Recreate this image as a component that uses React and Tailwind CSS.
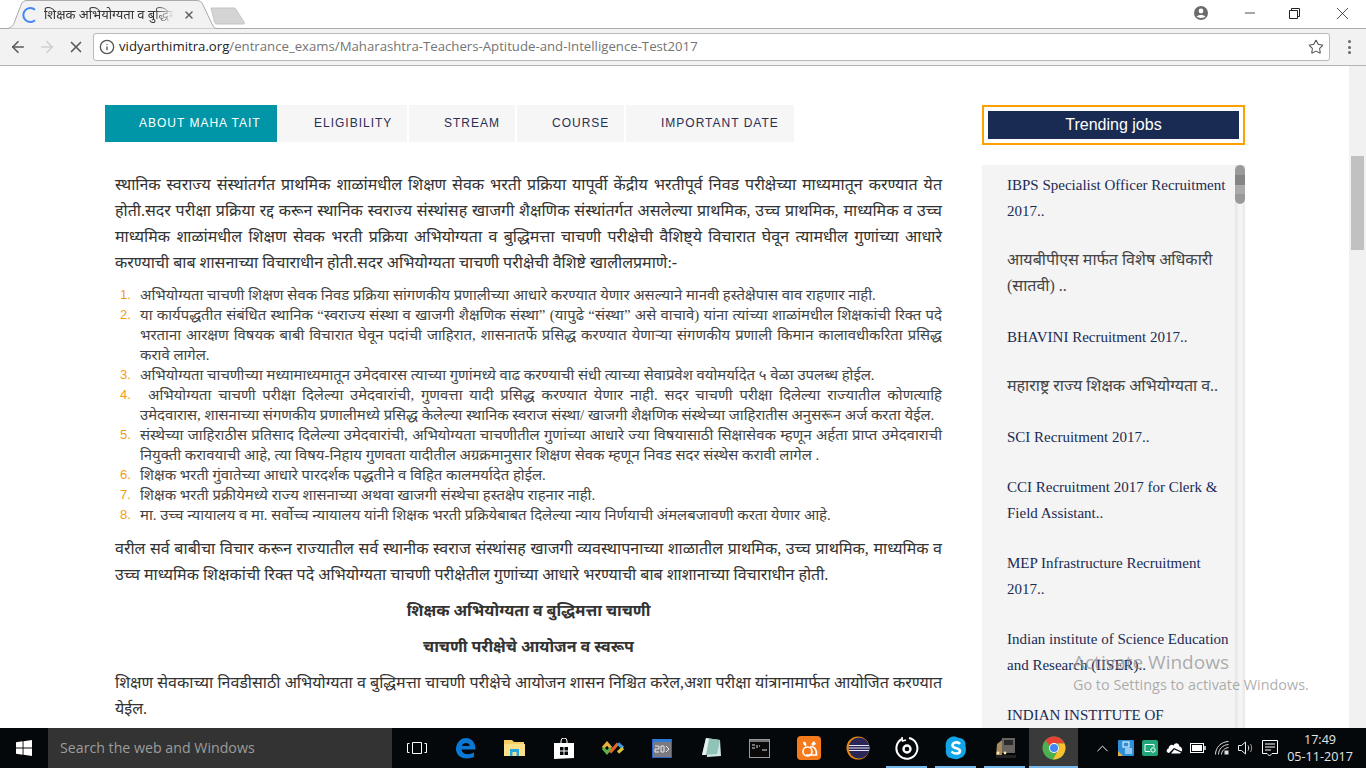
import React from 'react';
import { ArrowLeft, ArrowRight, X, Info, Star, Minus, ChevronUp } from 'lucide-react';

const DEVA = "font-['Liberation_Serif','Noto_Sans_Devanagari','Lohit_Devanagari','Noto_Serif_Devanagari','Noto_Sans',serif]";

const tabs = [
  { label: 'ABOUT MAHA TAIT', w: 'w-[172px]', pl: 'pl-[34px]', active: true },
  { label: 'ELIGIBILITY', w: 'w-[128px]', pl: 'pl-[35px]' },
  { label: 'STREAM', w: 'w-[106px]', pl: 'pl-[35px]' },
  { label: 'COURSE', w: 'w-[107px]', pl: 'pl-[35px]' },
  { label: 'IMPORTANT DATE', w: 'w-[168px]', pl: 'pl-[35px]' },
];

const para1 = [
  'स्थानिक स्वराज्य संस्थांतर्गत प्राथमिक शाळांमधील शिक्षण सेवक भरती प्रक्रिया यापूर्वी केंद्रीय भरतीपूर्व निवड परीक्षेच्या माध्यमातून करण्यात येत',
  'होती.सदर परीक्षा प्रक्रिया रद्द करून स्थानिक स्वराज्य संस्थांसह खाजगी शैक्षणिक संस्थांतर्गत असलेल्या प्राथमिक, उच्च प्राथमिक, माध्यमिक व उच्च',
  'माध्यमिक शाळांमधील शिक्षण सेवक भरती प्रक्रिया अभियोग्यता व बुद्धिमत्ता चाचणी परीक्षेची वैशिष्ट्ये विचारात घेवून त्यामधील गुणांच्या आधारे',
];

const points = [
  { lines: ['अभियोग्यता चाचणी शिक्षण सेवक निवड प्रक्रिया सांगणकीय प्रणालीच्या आधारे करण्यात येणार असल्याने मानवी हस्तेक्षेपास वाव राहणार नाही.'] },
  { lines: ['या कार्यपद्धतीत संबंधित स्थानिक “स्वराज्य संस्था व खाजगी शैक्षणिक संस्था” (यापुढे “संस्था” असे वाचावे) यांना त्यांच्या शाळांमधील शिक्षकांची रिक्त पदे', 'भरताना आरक्षण विषयक बाबी विचारात घेवून पदांची जाहिरात, शासनातर्फे प्रसिद्ध करण्यात येणाऱ्या संगणकीय प्रणाली किमान कालावधीकरिता प्रसिद्ध', 'करावे लागेल.'] },
  { lines: ['अभियोग्यता चाचणीच्या मध्यामाध्यमातून उमेदवारस त्याच्या गुणांमध्ये वाढ करण्याची संधी त्याच्या सेवाप्रवेश वयोमर्यादेत ५ वेळा उपलब्ध होईल.'] },
  { lines: ['अभियोग्यता चाचणी परीक्षा दिलेल्या उमेदवारांची, गुणवत्ता यादी प्रसिद्ध करण्यात येणार नाही. सदर चाचणी परीक्षा दिलेल्या राज्यातील कोणत्याहि', 'उमेदवारास, शासनाच्या संगणकीय प्रणालीमध्ये प्रसिद्ध केलेल्या स्थानिक स्वराज संस्था/ खाजगी शैक्षणिक संस्थेच्या जाहिरातीस अनुसरून अर्ज करता येईल.'], indent: true },
  { lines: ['संस्थेच्या जाहिराठीस प्रतिसाद दिलेल्या उमेदवारांची, अभियोग्यता चाचणीतील गुणांच्या आधारे ज्या विषयासाठी सिक्षासेवक म्हणून अर्हता प्राप्त उमेदवाराची', 'नियुक्ती करावयाची आहे, त्या विषय-निहाय गुणवता यादीतील अग्रक्रमानुसार शिक्षण सेवक म्हणून निवड सदर संस्थेस करावी लागेल .'] },
  { lines: ['शिक्षक भरती गुंवातेच्या आधारे पारदर्शक पद्धतीने व विहित कालमर्यादेत होईल.'] },
  { lines: ['शिक्षक भरती प्रक्रीयेमध्ये राज्य शासनाच्या अथवा खाजगी संस्थेचा हस्तक्षेप राहनार नाही.'] },
  { lines: ['मा. उच्च न्यायालय व मा. सर्वोच्च न्यायालय यांनी शिक्षक भरती प्रक्रियेबाबत दिलेल्या न्याय निर्णयाची अंमलबजावणी करता येणार आहे.'] },
];

const jobs = [
  { lines: ['IBPS Specialist Officer Recruitment', '2017..'], mb: 'mb-[23px]' },
  { lines: ['आयबीपीएस मार्फत विशेष अधिकारी', '(सातवी) ..'], hi: true, mb: 'mb-[25px]' },
  { lines: ['BHAVINI Recruitment 2017..'], mb: 'mb-[23px]' },
  { lines: ['महाराष्ट्र राज्य शिक्षक अभियोग्यता व..'], hi: true, mb: 'mb-[25px]' },
  { lines: ['SCI Recruitment 2017..'], mb: 'mb-[24px]' },
  { lines: ['CCI Recruitment 2017 for Clerk &', 'Field Assistant..'], mb: 'mb-[24px]' },
  { lines: ['MEP Infrastructure Recruitment', '2017..'], mb: 'mb-[24px]' },
  { lines: ['Indian institute of Science Education', 'and Research (IISER)..'], mb: 'mb-[24px]' },
  { lines: ['INDIAN INSTITUTE OF'], mb: '' },
];

// one justified line, breaks are fixed so they match the screenshot
const Line = ({ children, className = '' }) => (
  <div className={`text-justify [text-align-last:justify] ${className}`}>{children}</div>
);

const TabStrip = () => (
  <div className="h-[28px] flex bg-white relative">
    <div className="relative w-[212px] ml-[5px] h-[29px] z-10 flex items-center">
      <svg className="absolute inset-0" width="212" height="29" viewBox="0 0 212 29">
        <path d="M0.5 28.5 C6 28.5 8 26 9.5 22 L16 5 C17 2 19 0.5 22 0.5 L192 0.5 C195 0.5 197 2 198 5 L207 24 C208.5 27 210 28.5 212 28.5" fill="#f2f2f2" stroke="#aaaaaa" />
      </svg>
      <svg className="relative ml-[17px]" width="16" height="16" viewBox="0 0 16 16" fill="none">
        <path d="M13 2.8 A7 7 0 1 0 13 13.2" stroke="#4285f4" strokeWidth="2" />
      </svg>
      <span className={`relative ml-[6px] w-[130px] overflow-hidden whitespace-nowrap text-[13px] text-[#333] [mask-image:linear-gradient(to_right,black_85%,transparent)] ${DEVA}`}>शिक्षक अभियोग्यता व बुद्धिमत्ता</span>
      <X className="relative ml-[9px] text-[#5f5f5f]" size={12} strokeWidth={3} />
    </div>
    <svg className="ml-[-7px] mt-[7px]" width="36" height="18" viewBox="0 0 36 18">
      <path d="M1 1 L25 1 L34 15 Q35 17 33 17 L7 17 Q5 17 4.5 15 Z" fill="#d4d4d4" stroke="#c4c4c4" />
    </svg>
    <div className="ml-auto flex items-start">
      <svg className="mt-[6px] mr-[34px]" width="14" height="14" viewBox="0 0 14 14">
        <circle cx="7" cy="7" r="7" fill="#6b6b6b" />
        <circle cx="7" cy="5" r="2.4" fill="#fff" />
        <path d="M2.6 10.6 C4 8.4 10 8.4 11.4 10.6 C10 12.4 4 12.4 2.6 10.6 Z" fill="#fff" />
      </svg>
      <Minus className="mt-[5px] mr-[31px] text-[#222]" size={16} strokeWidth={1.2} />
      <svg className="mt-[8px] mr-[32px]" width="11" height="11" viewBox="0 0 11 11" fill="none" stroke="#222">
        <path d="M0.5 2.5 H8.5 V10.5 H0.5 Z M2.5 2.5 V0.5 H10.5 V8.5 H8.5" />
      </svg>
      <X className="mt-[3px] mr-[13px] text-[#222]" size={21} strokeWidth={0.9} />
    </div>
  </div>
);

const Toolbar = () => (
  <div className="h-[38px] bg-[#f2f2f2] border-t border-[#aaaaaa] border-b border-b-[#b4b4b4] flex items-center">
    <ArrowLeft className="ml-[9px] text-[#5a5a5a]" size={18} strokeWidth={2.2} />
    <ArrowRight className="ml-[11px] text-[#cfcfcf]" size={18} strokeWidth={2.2} />
    <X className="ml-[11px] text-[#5a5a5a]" size={18} strokeWidth={2.2} />
    <div className="ml-[8px] w-[1237px] h-[28px] bg-white border border-[#b9b9b9] rounded-[3px] flex items-center">
      <Info className="ml-[5px] text-[#555]" size={16} strokeWidth={2} />
      <span className="ml-[4px] text-[13.2px] font-['Open_Sans','Liberation_Sans',sans-serif] text-[#222]">
        vidyarthimitra.org<span className="text-[#757575]">/entrance_exams/Maharashtra-Teachers-Aptitude-and-Intelligence-Test2017</span>
      </span>
      <Star className="ml-auto mr-[5px] text-[#555]" size={16} strokeWidth={1.6} />
    </div>
    <div className="ml-[18px] flex flex-col gap-[2.5px]">
      <span className="w-[3px] h-[3px] rounded-full bg-[#666]" />
      <span className="w-[3px] h-[3px] rounded-full bg-[#666]" />
      <span className="w-[3px] h-[3px] rounded-full bg-[#666]" />
    </div>
  </div>
);

const ArticleColumn = () => (
  <div className="w-[877px] flex flex-col">
    <div className="flex gap-[2px]">
      {tabs.map((t) => (
        <div key={t.label} className={`${t.w} ${t.pl} h-[37px] pb-[2px] flex items-center text-[12px] tracking-[1px] font-['Liberation_Sans',sans-serif] ${t.active ? 'bg-[#0096a8] text-white' : 'bg-[#f6f6f6] text-[#2a2f55]'}`}>
          {t.label}
        </div>
      ))}
    </div>
    <div className={`mt-[30px] w-[827px] ml-[10px] text-[16px] leading-[26px] text-[#333] ${DEVA}`}>
      {para1.map((l, i) => <Line key={i}>{l}</Line>)}
      <div>करण्याची बाब शासनाच्या विचाराधीन होती.सदर अभियोग्यता चाचणी परीक्षेची वैशिष्टे खालीलप्रमाणे:-</div>
    </div>
    <ol className={`mt-[9px] ml-[15px] w-[822px] text-[14.9px] leading-[20px] text-[#444] ${DEVA}`}>
      {points.map((p, i) => (
        <li key={i} className="flex">
          <span className="w-[20px] shrink-0 text-[#f39c12] font-['Liberation_Sans',sans-serif] text-[13px]">{i + 1}.</span>
          <div className="flex-1 min-w-0">
            {p.lines.map((l, j) => (
              j === p.lines.length - 1
                ? <div key={j} className={p.indent && j === 0 ? 'pl-[8px]' : ''}>{l}</div>
                : <Line key={j} className={p.indent && j === 0 ? 'pl-[8px]' : ''}>{l}</Line>
            ))}
          </div>
        </li>
      ))}
    </ol>
    <div className={`mt-[11px] ml-[10px] w-[827px] text-[16px] leading-[26px] text-[#333] ${DEVA}`}>
      <Line>वरील सर्व बाबीचा विचार करून राज्यातील सर्व स्थानीक स्वराज संस्थांसह खाजगी व्यवस्थापनाच्या शाळातील प्राथमिक, उच्च प्राथमिक, माध्यमिक व</Line>
      <div>उच्च माध्यमिक शिक्षकांची रिक्त पदे अभियोग्यता चाचणी परीक्षेतील गुणांच्या आधारे भरण्याची बाब शाशानाच्या विचाराधीन होती.</div>
      <div className="mt-[10px] text-center font-bold">शिक्षक अभियोग्यता व बुद्धिमत्ता चाचणी</div>
      <div className="mt-[10px] text-center font-bold">चाचणी परीक्षेचे आयोजन व स्वरूप</div>
      <Line className="mt-[10px]">शिक्षण सेवकाच्या निवडीसाठी अभियोग्यता व बुद्धिमत्ता चाचणी परीक्षेचे आयोजन शासन निश्चित करेल,अशा परीक्षा यांत्रानामार्फत आयोजित करण्यात</Line>
      <div>येईल.</div>
    </div>
  </div>
);

const Sidebar = () => (
  <div className="w-[263px] flex flex-col">
    <div className="h-[40px] border-2 border-[#ff9f00] p-[4px]">
      <div className="h-full bg-[#1a2b53] text-white flex items-center justify-center text-[16px] font-['Liberation_Sans',sans-serif]">Trending jobs</div>
    </div>
    <div className="mt-[20px] flex-1 min-h-0 bg-[#f4f4f4] flex overflow-hidden">
      <div className="flex-1 pl-[25px] pt-[7px] text-[15px] leading-[26px] text-[#1a2b53]">
        {jobs.map((j, i) => (
          <div key={i} className={`${j.mb} whitespace-nowrap ${j.hi ? `text-[16px] text-[#444] ${DEVA}` : "font-['Liberation_Serif',serif]"}`}>
            {j.lines.map((l) => <div key={l}>{l}</div>)}
          </div>
        ))}
      </div>
      <div className="w-[10px] bg-gradient-to-r from-[#e4e4e4] via-[#f8f8f8] to-[#e8e8e8]">
        <div className="h-[39px] rounded-[5px] bg-[#9a9a9a] flex flex-col justify-center">
          <div className="h-[10px] bg-[#858585]" />
          <div className="h-[9px] bg-[#aaaaaa]" />
        </div>
      </div>
    </div>
  </div>
);

const TaskIcon = ({ children, running, active }) => (
  <div className={`w-[49px] h-full relative flex items-center justify-center ${active ? 'bg-[#3a3a3a]' : ''}`}>
    {children}
    {running && <span className={`absolute bottom-0 h-[2px] bg-[#76b9ed] ${active ? 'left-0 right-0' : 'left-[4px] right-[4px]'}`} />}
  </div>
);

const TrayCell = ({ children }) => (
  <div className="w-[24px] flex justify-center items-center">{children}</div>
);

const Taskbar = () => (
  <div className="h-[40px] bg-[#05080a] flex items-center text-white shrink-0">
    <div className="w-[48px] flex justify-center">
      <svg width="16" height="16" viewBox="0 0 16 16" fill="#fff">
        <path d="M0 2.3 L6.6 1.3 V7.5 H0 Z M7.5 1.2 L16 0 V7.5 H7.5 Z M0 8.4 H6.6 V14.7 L0 13.7 Z M7.5 8.4 H16 V16 L7.5 14.8 Z" />
      </svg>
    </div>
    <div className="w-[344px] h-full bg-[#333333] flex items-center pl-[12px] text-[14.2px] text-[#9c9c9c] font-['Open_Sans','Liberation_Sans',sans-serif]">Search the web and Windows</div>
    <div className="flex h-full">
      <TaskIcon>
        <svg width="20" height="14" viewBox="0 0 20 14" fill="none" stroke="#fff">
          <path d="M5.5 1.5 H14.5 V12.5 H5.5 Z M2.5 2.5 H0.5 V11.5 H2.5 M17.5 2.5 H19.5 V11.5 H17.5" />
        </svg>
      </TaskIcon>
      <TaskIcon>
        <svg width="21" height="21" viewBox="0 0 21 21">
          <path d="M1 10 C2 3 7 0 11 0 C17 0 20.5 5 20.5 11.5 H6.5 C7 16.5 13.5 17.5 19 14.5 V19 C12 22 2 20.5 1 12 Z M6.8 8 H14.8 C14.5 4 8 4 6.8 8 Z" fill="#0a78d4" />
        </svg>
      </TaskIcon>
      <TaskIcon>
        <svg width="21" height="18" viewBox="0 0 21 18">
          <path d="M0 1 H8 L10 3 H20 V17 H0 Z" fill="#f6cf63" />
          <path d="M0 5 H21 V17 H0 Z" fill="#fbe08a" />
          <path d="M6 10 H15 V17 H12.5 V13 H8.5 V17 H6 Z" fill="#2aa6de" />
        </svg>
      </TaskIcon>
      <TaskIcon>
        <svg width="20" height="21" viewBox="0 0 20 21">
          <path d="M7 5 V3 A3 3 0 0 1 13 3 V5" fill="none" stroke="#fff" />
          <path d="M0 5 H20 V20 L0 21 Z" fill="#fff" />
          <path d="M6 9 H9.5 V12.5 H6 Z M10.5 9 H14 V12.5 H10.5 Z M6 13.5 H9.5 V17 H6 Z M10.5 13.5 H14 V17 H10.5 Z" fill="#05080a" />
        </svg>
      </TaskIcon>
      <TaskIcon>
        <svg width="24" height="14" viewBox="0 0 24 14" fill="none" strokeWidth="3.2">
          <path d="M2 7 L6 2.5 L10 7" stroke="#e8b23c" />
          <path d="M2 7 L6 11.5 L10 7" stroke="#5fb04a" />
          <path d="M9 11.5 L17 2.5" stroke="#e8622c" />
          <path d="M17 2.5 L22 7" stroke="#3c9ad8" />
          <path d="M22 7 L17 11.5" stroke="#d8c23c" />
        </svg>
      </TaskIcon>
      <TaskIcon>
        <svg width="20" height="19" viewBox="0 0 20 19">
          <rect width="20" height="19" fill="#7a7a80" />
          <rect width="20" height="3" fill="#2f7ad8" />
          <path d="M0 0 H1 V19 H0 Z M19 0 H20 V19 H19 Z M0 18 H20 V19 H0 Z" fill="#2f62c8" />
          <path d="M3 7 H7 V10 H3 V13 H7 M9 7 H12 V13 H9 Z M14 7 L17 10 L14 13" stroke="#e8e8e8" strokeWidth="1" fill="none" />
        </svg>
      </TaskIcon>
      <TaskIcon>
        <svg width="22" height="22" viewBox="0 0 22 22">
          <path d="M6 1 L20 3 L21 19 L7 20 Z" fill="#cfe6e6" />
          <path d="M6 1 L20 3 L17 17 L2 18 Z" fill="#8fc3b8" />
          <path d="M2 18 L6 1 L9 2 L6 18 Z" fill="#e4f0ec" />
        </svg>
      </TaskIcon>
      <TaskIcon>
        <svg width="21" height="19" viewBox="0 0 21 19">
          <rect x="0.5" y="0.5" width="20" height="18" fill="#0a0a0a" stroke="#9a9a9a" />
          <rect x="1" y="1" width="19" height="2" fill="#777" />
          <path d="M3 6 H6 M3 9 H6 M8 6 V9 M10 7 H11 M13 11 H18" stroke="#ddd" strokeWidth="1" />
        </svg>
      </TaskIcon>
      <TaskIcon>
        <svg width="24" height="24" viewBox="0 0 24 24">
          <rect width="24" height="24" rx="4" fill="#f47a1c" />
          <path d="M6 6 C9 5 10 8 9 11 C7 9 6 8 6 6 Z M17 5 L19 8 L16 10 L14 8 Z" fill="#fff" />
          <circle cx="10.5" cy="15.5" r="4.5" fill="none" stroke="#fff" strokeWidth="1.6" />
          <path d="M13 11 C17 10 20 13 19.5 19 H9" fill="none" stroke="#fff" strokeWidth="1.6" />
        </svg>
      </TaskIcon>
      <TaskIcon>
        <svg width="24" height="24" viewBox="0 0 24 24">
          <circle cx="12" cy="12" r="11.5" fill="#e88a10" />
          <circle cx="13" cy="12" r="10.5" fill="#2a2658" />
          <path d="M3 9.5 H23 M2.5 12 H23.5 M3 14.5 H23" stroke="#e6e6f4" strokeWidth="1.2" />
        </svg>
      </TaskIcon>
      <TaskIcon running>
        <svg width="24" height="24" viewBox="0 0 24 24" fill="none" stroke="#fff">
          <path d="M14 2 A10.5 10.5 0 1 1 7 3" strokeWidth="2" />
          <path d="M7 1 L7.5 5 L11 4" strokeWidth="1.5" />
          <circle cx="12" cy="13" r="3.5" strokeWidth="2.4" />
        </svg>
      </TaskIcon>
      <TaskIcon running>
        <svg width="22" height="24" viewBox="0 0 22 24">
          <path d="M6 1 C9 0 12 1 14 2 C19 2 21 6 20.5 10 C22 15 20 21 15 22 C12 24 8 23 6 22 C2 22 0 17 1 13 C0 8 1 3 6 1 Z" fill="#12a5e8" />
          <path d="M15 8 C13 5.5 7.5 6 7.5 9.5 C7.5 13 15 11.5 15 15 C15 18 9 18.5 6.5 15.5" fill="none" stroke="#fff" strokeWidth="2.6" />
        </svg>
      </TaskIcon>
      <TaskIcon running>
        <svg width="24" height="24" viewBox="0 0 24 24">
          <path d="M9 2 H22 V17 H9 Z" fill="#6a6460" />
          <path d="M4 8 L9 4 V20 H3 Z" fill="#a88a5c" />
          <path d="M11 4 H20 V9 H11 Z" fill="#2a2a2a" />
          <rect x="3" y="19" width="20" height="3" fill="#222" />
          <circle cx="5" cy="17" r="1.4" fill="#f5e8b0" />
          <circle cx="12" cy="17" r="1.4" fill="#f5e8b0" />
        </svg>
      </TaskIcon>
      <TaskIcon running active>
        <svg width="24" height="24" viewBox="0 0 24 24">
          <circle cx="12" cy="12" r="11.5" fill="#4caf50" />
          <path d="M12 0.5 A11.5 11.5 0 0 1 22.5 7.5 H12 A4.5 4.5 0 0 0 7.8 10.2 L3.4 4.3 A11.5 11.5 0 0 1 12 0.5 Z" fill="#e94235" />
          <path d="M22.5 7.5 A11.5 11.5 0 0 1 11 23.4 L16 14.5 A4.5 4.5 0 0 0 15.5 7.5 Z" fill="#fbc02d" />
          <circle cx="12" cy="12" r="5" fill="#fff" />
          <circle cx="12" cy="12" r="4" fill="#4285f4" />
        </svg>
      </TaskIcon>
    </div>
    <div className="ml-auto flex items-center h-full">
      <TrayCell><ChevronUp className="text-white" size={19} strokeWidth={1.2} /></TrayCell>
      <TrayCell>
        <svg width="16" height="16" viewBox="0 0 16 16">
          <rect width="16" height="16" rx="1" fill="#2d8fd8" />
          <path d="M0 16 V11 L5 16 Z" fill="#e8b23c" />
          <rect x="5" y="2" width="6" height="5" fill="none" stroke="#fff" />
          <path d="M7 9 H14 M7 11 H14 M7 13 H14" stroke="#fff" />
        </svg>
      </TrayCell>
      <TrayCell>
        <svg width="16" height="16" viewBox="0 0 16 16" fill="none">
          <rect width="16" height="16" rx="2" fill="#21a67a" />
          <path d="M3 4.5 H12 V7 M3 4.5 V11.5 H8" stroke="#fff" />
          <circle cx="11" cy="10" r="2.2" stroke="#fff" />
        </svg>
      </TrayCell>
      <TrayCell>
        <svg width="17" height="12" viewBox="0 0 17 12" fill="#fff">
          <path d="M3 11 C0 11 0 7 2.5 6.5 C3 3 6 2 7.5 3.5 C9 0 13 0.5 13.5 4.5 C16 5 17 8 15.5 9.5 L8 6 L3 11 Z" />
          <path d="M5 11.5 L8.3 7.5 L15 10.5 L14 11.5 Z" />
        </svg>
      </TrayCell>
      <TrayCell>
        <svg width="16" height="10" viewBox="0 0 16 10" fill="none">
          <rect x="0.5" y="0.5" width="13" height="9" stroke="#fff" />
          <rect x="2" y="2" width="10" height="6" fill="#fff" />
          <rect x="14" y="3" width="2" height="4" fill="#bbb" />
        </svg>
      </TrayCell>
      <TrayCell>
        <svg width="14" height="14" viewBox="0 0 14 14" fill="none" stroke="#ddd">
          <path d="M0.5 13.5 C0.5 6.5 6 0.8 13.5 0.5" />
          <path d="M3.5 13.5 C3.5 8 8 3.8 13.5 3.5" />
          <path d="M6.5 13.5 C6.5 10 9.5 7 13.5 6.5" />
          <rect x="9.5" y="9.5" width="4" height="4" fill="#ddd" stroke="none" />
        </svg>
      </TrayCell>
      <TrayCell>
        <svg width="16" height="14" viewBox="0 0 16 14" fill="none" stroke="#eee">
          <path d="M0.5 4.5 H3.5 L7.5 1 V13 L3.5 9.5 H0.5 Z" />
          <path d="M10 4.5 C11 6 11 8 10 9.5" />
          <path d="M12.5 3 C14 5.5 14 8.5 12.5 11" stroke="#999" />
        </svg>
      </TrayCell>
      <TrayCell>
        <svg width="16" height="17" viewBox="0 0 16 17" fill="none" stroke="#fff">
          <path d="M0.5 0.5 H15.5 V13.5 H10 L7.5 16 L5 13.5 H0.5 Z" />
          <path d="M3 4 H13 M3 7 H13 M3 10 H9" />
        </svg>
      </TrayCell>
      <div className="w-[76px] mr-[8px] text-center text-[12.6px] leading-[17px] text-[#e4e4e4] font-['Open_Sans','Liberation_Sans',sans-serif]">
        <div>17:49</div>
        <div>05-11-2017</div>
      </div>
    </div>
  </div>
);

export default function App() {
  return (
    <div className="w-[1366px] h-[768px] overflow-hidden flex flex-col bg-white relative">
      <TabStrip />
      <Toolbar />
      <div className="flex-1 min-h-0 flex overflow-hidden">
        <div className="flex-1 flex pl-[105px] pt-[39px]">
          <ArticleColumn />
          <Sidebar />
        </div>
        <div className="w-[17px] bg-[#f1f1f1] flex flex-col">
          <div className="mt-[90px] mx-[2px] h-[94px] bg-[#c1c1c1]" />
        </div>
      </div>
      <Taskbar />
      <div className="absolute left-[1073px] top-[649px] text-[#8a8a8a]/70 font-['Open_Sans','Liberation_Sans',sans-serif] pointer-events-none">
        <div className="text-[19px] leading-[26px]">Activate Windows</div>
        <div className="text-[14.4px] leading-[20px]">Go to Settings to activate Windows.</div>
      </div>
    </div>
  );
}
